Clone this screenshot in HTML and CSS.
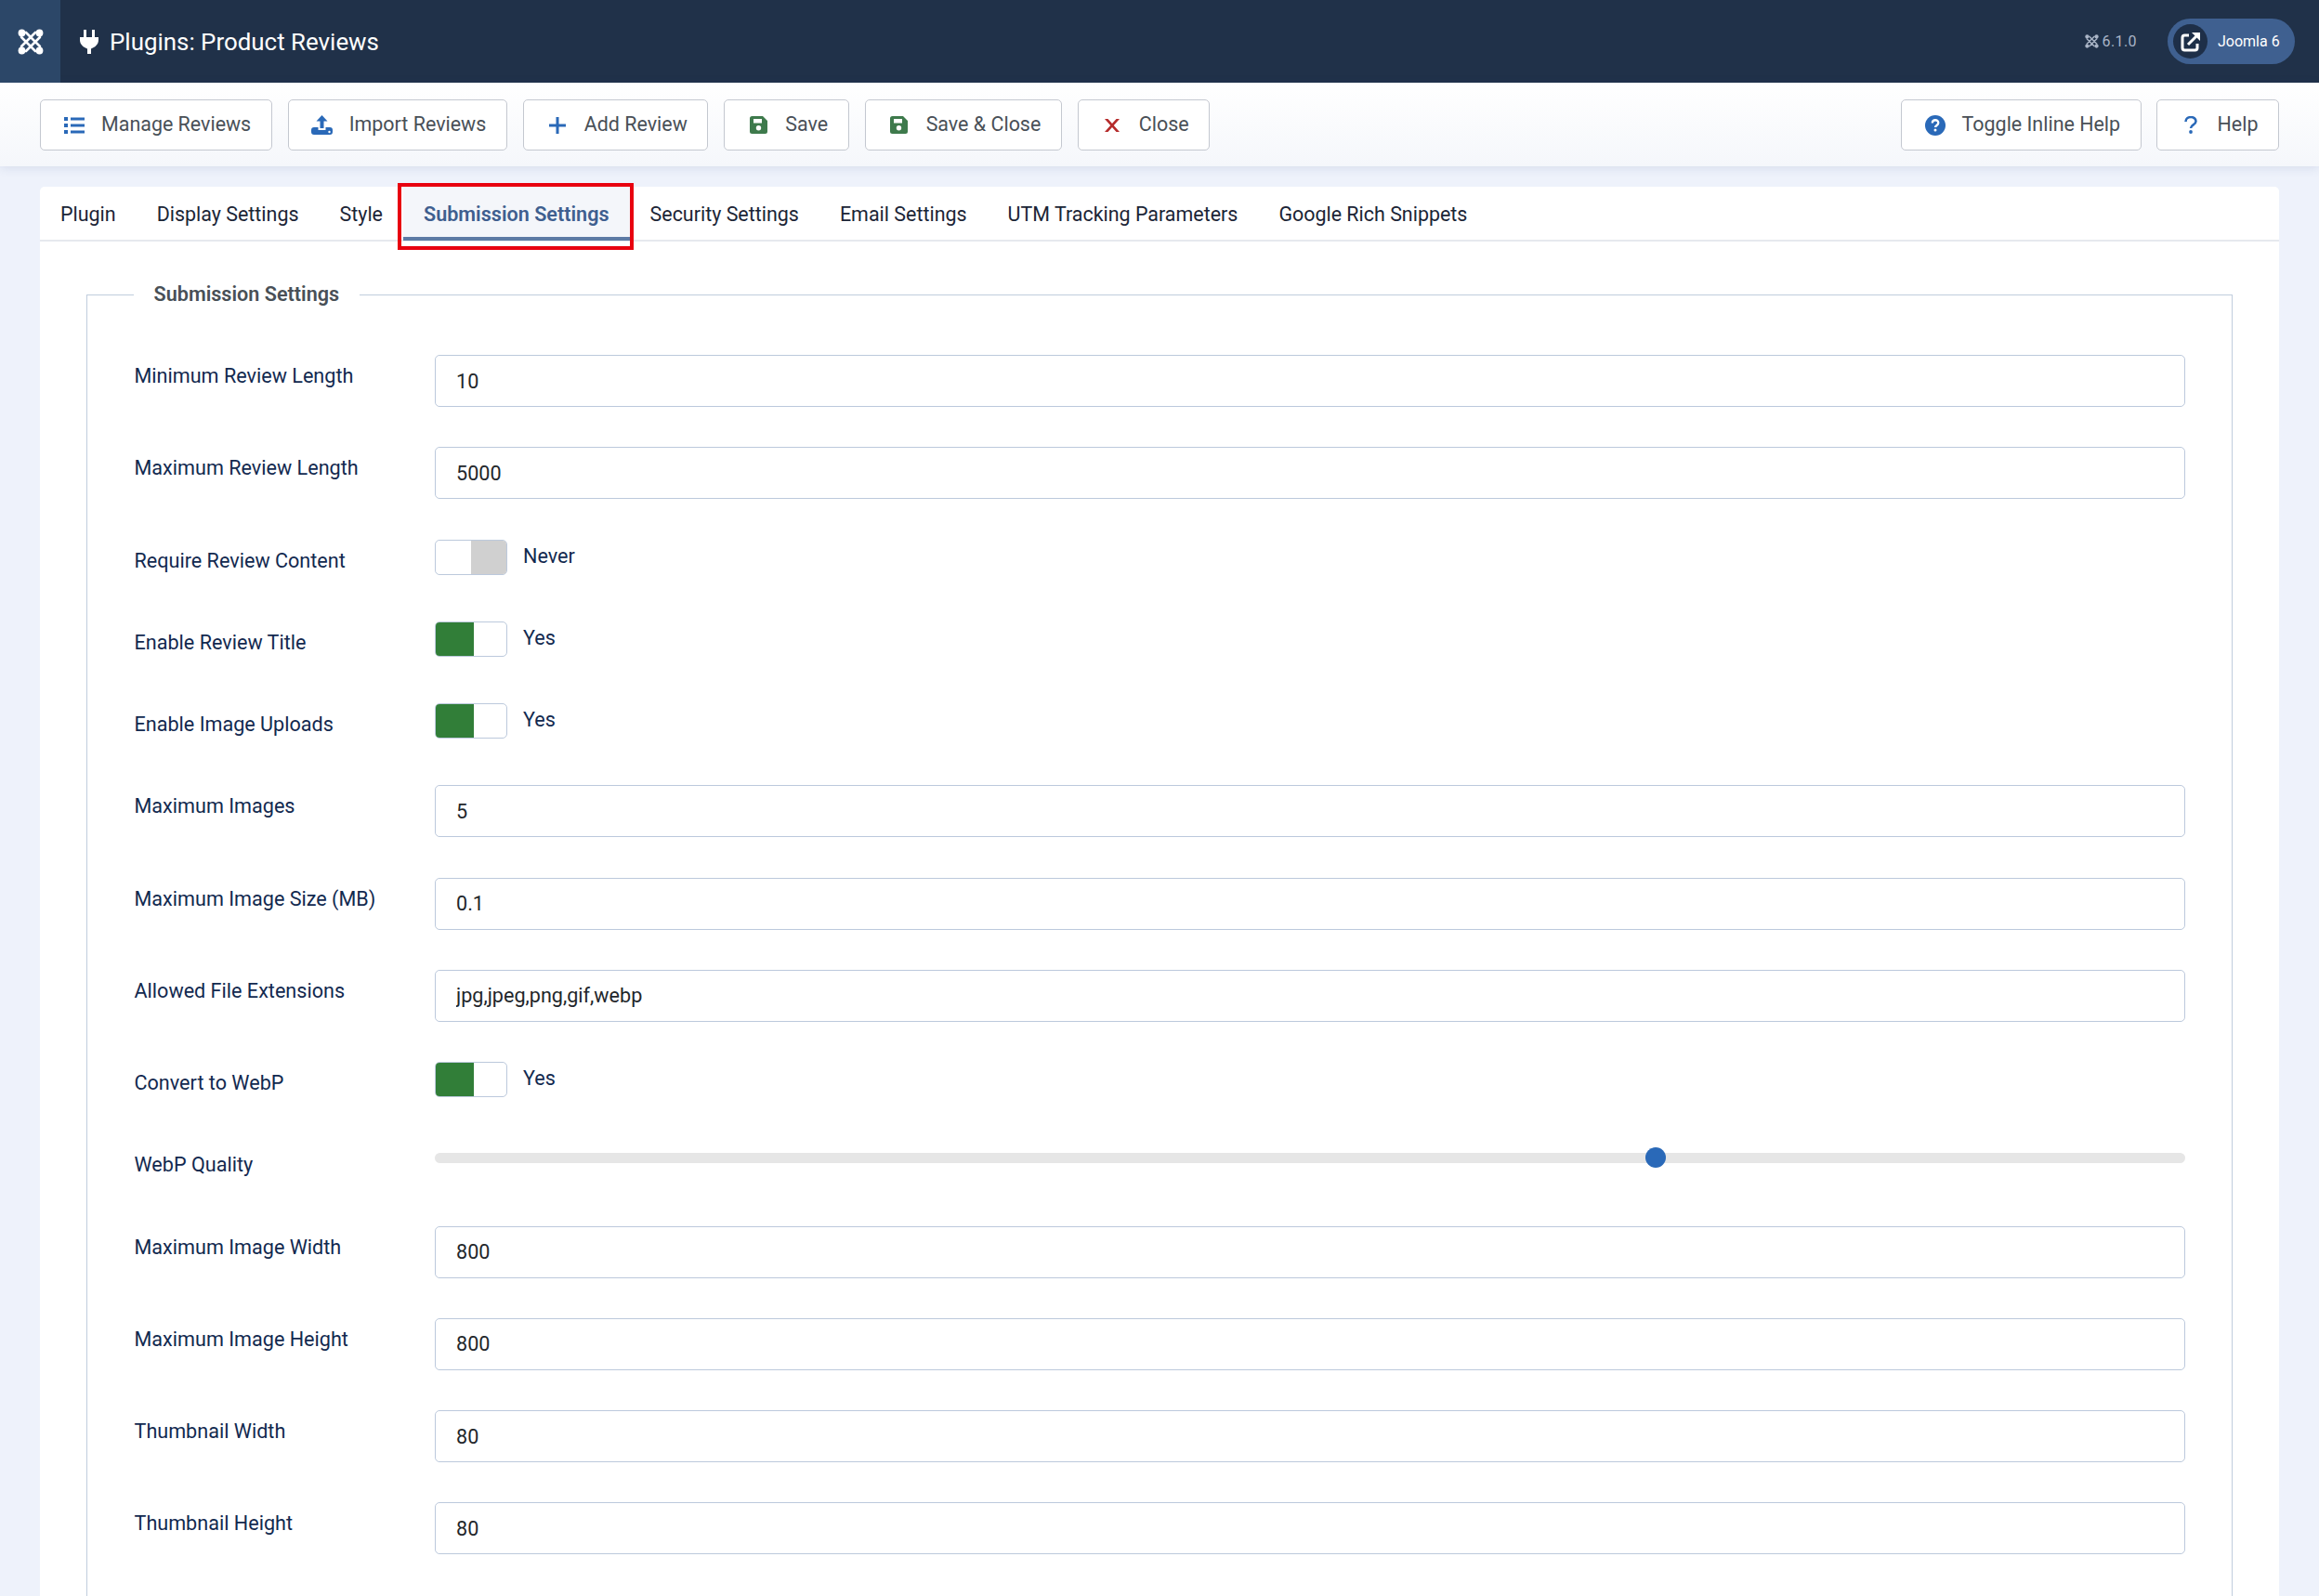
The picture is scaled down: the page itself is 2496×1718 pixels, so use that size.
FILE: index.html
```html
<!DOCTYPE html>
<html lang="en">
<head>
    <meta charset="UTF-8">
    <meta name="viewport" content="width=device-width, initial-scale=1.0">
    <title>Plugins: Product Reviews</title>
    <link rel="stylesheet" href="styles.css">
</head>
<body>
    <header class="topbar">
        <div class="brand">
            <svg class="brand-logo" viewBox="0 0 28 28"><use href="#joomla"/></svg>
        </div>
        <div class="page-title">
            <svg class="plug" viewBox="0 0 22 26"><path d="M5 0h3v8H5zM14 0h3v8h-3zM1 8h20v3c0 5-4 8-8 9.500V26H9v-5.500C5 19 1 16 1 11z"/></svg>
            <h1>Plugins: Product Reviews</h1>
        </div>
        <div class="version">
            <svg class="version-logo" viewBox="0 0 28 28"><use href="#joomla"/></svg>
            <span>6.1.0</span>
        </div>
        <a class="site-link">
            <span class="site-link-icon">
                <svg viewBox="0 0 22 22"><path d="M9 4H4.500A2.500 2.500 0 0 0 2 6.500v11A2.500 2.500 0 0 0 4.500 20h11a2.500 2.500 0 0 0 2.500-2.500V13" fill="none" stroke="#fff" stroke-width="3"/><path d="M8 14L18 4" fill="none" stroke="#fff" stroke-width="3"/><path d="M12 1h9v9z" fill="#fff"/></svg>
            </span>
            <span>Joomla 6</span>
        </a>
    </header>

    <svg class="defs" width="0" height="0">
        <symbol id="joomla" viewBox="0 0 28 28">
            <g fill="none" stroke="currentColor" stroke-width="2.600" stroke-linecap="round">
                <path d="M4 9l15 15M9 4l15 15M24 9L9 24M19 4L4 19"/>
            </g>
            <g fill="currentColor">
                <circle cx="4.500" cy="4.500" r="3.900"/>
                <circle cx="23.500" cy="4.500" r="3.900"/>
                <circle cx="4.500" cy="23.500" r="3.900"/>
                <circle cx="23.500" cy="23.500" r="3.900"/>
            </g>
        </symbol>
        <symbol id="floppy" viewBox="0 0 19 19">
            <path fill-rule="evenodd" d="M2.500 0H14l5 5v11.500a2.500 2.500 0 0 1-2.500 2.500h-14A2.500 2.500 0 0 1 0 16.500v-14A2.500 2.500 0 0 1 2.500 0zM4 3v4.500h9V3zM9.500 10a2.700 2.700 0 1 0 0 5.400 2.700 2.700 0 0 0 0-5.400z"/>
        </symbol>
    </svg>

    <nav class="toolbar">
        <div class="toolbar-group">
            <button class="btn">
                <span class="btn-icon"><svg class="ico-blue" width="22" height="18" viewBox="0 0 22 18"><path d="M0 0h4v4H0zM0 7h4v4H0zM0 14h4v4H0zM7 .500h15v3H7zM7 7.500h15v3H7zM7 14.500h15v3H7z"/></svg></span>
                <span>Manage Reviews</span>
            </button>
            <button class="btn">
                <span class="btn-icon"><svg class="ico-blue" width="23" height="21" viewBox="0 0 23 21"><path d="M11.500 0l6 6.500h-4V14h-4V6.500h-4z"/><path fill-rule="evenodd" d="M3 13h4.500v3h8v-3H20a3 3 0 0 1 3 3v2a3 3 0 0 1-3 3H3a3 3 0 0 1-3-3v-2a3 3 0 0 1 3-3zM19.500 16.800a1.200 1.200 0 1 0 0 2.400 1.200 1.200 0 0 0 0-2.400z"/></svg></span>
                <span>Import Reviews</span>
            </button>
            <button class="btn">
                <span class="btn-icon"><svg class="ico-blue" width="18" height="18" viewBox="0 0 18 18"><path d="M7.500 0h3v7.500H18v3h-7.500V18h-3v-7.500H0v-3h7.500z"/></svg></span>
                <span>Add Review</span>
            </button>
            <button class="btn">
                <span class="btn-icon"><svg class="ico-green" width="19" height="19"><use href="#floppy"/></svg></span>
                <span>Save</span>
            </button>
            <button class="btn">
                <span class="btn-icon"><svg class="ico-green" width="19" height="19"><use href="#floppy"/></svg></span>
                <span>Save &amp; Close</span>
            </button>
            <button class="btn">
                <span class="btn-icon"><svg class="ico-red" width="16" height="14" viewBox="0 0 16 14"><path d="M0 0h3.500L8 5 12.500 0H16L9.800 7 16 14h-3.500L8 9l-4.500 5H0l6.200-7z"/></svg></span>
                <span>Close</span>
            </button>
        </div>
        <div class="toolbar-group toolbar-group-right">
            <button class="btn">
                <span class="btn-icon"><svg width="22" height="22" viewBox="0 0 22 22"><circle class="ico-blue" cx="11" cy="11" r="11"/><path d="M7.800 8.500c0-4.300 6.500-4.300 6.500-.2 0 2.700-3.300 2.500-3.300 4.700" fill="none" stroke="#fff" stroke-width="2.300"/><circle cx="11" cy="16" r="1.500" fill="#fff"/></svg></span>
                <span>Toggle Inline Help</span>
            </button>
            <button class="btn">
                <span class="btn-icon"><svg width="14" height="19" viewBox="0 0 14 19"><path d="M1.500 6C1.500-.5 12.500-.5 12.500 5.500c0 4-5.500 3.800-5.500 7.500" fill="none" stroke="#2a69b8" stroke-width="2.600"/><circle class="ico-blue" cx="7" cy="17" r="1.900"/></svg></span>
                <span>Help</span>
            </button>
        </div>
    </nav>

    <main class="content">
        <div class="tabs">
            <a class="tab">Plugin</a>
            <a class="tab">Display Settings</a>
            <a class="tab">Style</a>
            <a class="tab active">Submission Settings<span class="highlight"></span></a>
            <a class="tab">Security Settings</a>
            <a class="tab">Email Settings</a>
            <a class="tab">UTM Tracking Parameters</a>
            <a class="tab">Google Rich Snippets</a>
        </div>

        <div class="panel">
            <fieldset class="options">
                <legend>Submission Settings</legend>

                <div class="row">
                    <label>Minimum Review Length</label>
                    <input type="text" value="10">
                </div>
                <div class="row">
                    <label>Maximum Review Length</label>
                    <input type="text" value="5000">
                </div>
                <div class="row row-short">
                    <label>Require Review Content</label>
                    <div class="switch-wrap">
                        <span class="switch off"><span class="knob"></span></span>
                        <span class="switch-value">Never</span>
                    </div>
                </div>
                <div class="row row-short">
                    <label>Enable Review Title</label>
                    <div class="switch-wrap">
                        <span class="switch on"><span class="knob"></span></span>
                        <span class="switch-value">Yes</span>
                    </div>
                </div>
                <div class="row row-short">
                    <label>Enable Image Uploads</label>
                    <div class="switch-wrap">
                        <span class="switch on"><span class="knob"></span></span>
                        <span class="switch-value">Yes</span>
                    </div>
                </div>
                <div class="row">
                    <label>Maximum Images</label>
                    <input type="text" value="5">
                </div>
                <div class="row">
                    <label>Maximum Image Size (MB)</label>
                    <input type="text" value="0.1">
                </div>
                <div class="row">
                    <label>Allowed File Extensions</label>
                    <input type="text" value="jpg,jpeg,png,gif,webp">
                </div>
                <div class="row row-short">
                    <label>Convert to WebP</label>
                    <div class="switch-wrap">
                        <span class="switch on"><span class="knob"></span></span>
                        <span class="switch-value">Yes</span>
                    </div>
                </div>
                <div class="row row-short">
                    <label>WebP Quality</label>
                    <input class="range" type="range" min="0" max="100" value="70">
                </div>
                <div class="row">
                    <label>Maximum Image Width</label>
                    <input type="text" value="800">
                </div>
                <div class="row">
                    <label>Maximum Image Height</label>
                    <input type="text" value="800">
                </div>
                <div class="row">
                    <label>Thumbnail Width</label>
                    <input type="text" value="80">
                </div>
                <div class="row">
                    <label>Thumbnail Height</label>
                    <input type="text" value="80">
                </div>
            </fieldset>
        </div>
    </main>
</body>
</html>
```

FILE: styles.css
```css
* {
    box-sizing: border-box;
    margin: 0;
    padding: 0;
}

html, body {
    height: 100vh;
    overflow: hidden;
}

body {
    background: #eef2fb;
    font-family: Roboto, 'Noto Sans', sans-serif;
    font-size: 21.6px;
    color: #22262a;
}

.defs {
    position: absolute;
}

/* top bar */
.topbar {
    display: flex;
    align-items: center;
    height: 89px;
    background: #203149;
    color: #fff;
    padding-right: 26px;
}

.brand {
    display: flex;
    align-items: center;
    justify-content: center;
    width: 65px;
    height: 100%;
    background: #2c4768;
}

.brand-logo {
    width: 28px;
    height: 28px;
    color: #fff;
}

.page-title {
    display: flex;
    align-items: center;
    gap: 11px;
    margin-left: 20px;
    flex: 1;
}

.page-title h1 {
    font-size: 25.9px;
    font-weight: 400;
}

.plug {
    width: 22px;
    height: 26px;
    fill: #fff;
}

.version {
    display: flex;
    align-items: center;
    gap: 4px;
    font-size: 16px;
    letter-spacing: 0.4px;
    color: #a9b4c6;
    margin-right: 33px;
}

.version-logo {
    width: 15px;
    height: 15px;
    color: #a9b4c6;
}

.site-link {
    display: flex;
    align-items: center;
    gap: 11px;
    width: 137px;
    height: 49px;
    padding-left: 6px;
    border-radius: 25px;
    background: #3f6090;
    font-size: 16px;
}

.site-link-icon {
    display: flex;
    align-items: center;
    justify-content: center;
    width: 37px;
    height: 37px;
    border-radius: 50%;
    background: #1e2f48;
}

.site-link-icon svg {
    width: 22px;
    height: 22px;
}

/* toolbar */
.toolbar {
    display: flex;
    justify-content: space-between;
    height: 90px;
    padding: 18px 43px 0;
    background: linear-gradient(#fff, #f5f7fb);
    box-shadow: 0 2px 10px rgba(52, 78, 130, 0.12);
}

.toolbar-group {
    display: flex;
    gap: 17px;
}

.toolbar-group-right {
    gap: 16px;
}

.btn {
    display: flex;
    align-items: center;
    gap: 15px;
    height: 55px;
    padding: 0 21.5px 2px 22px;
    background: #fff;
    border: 1px solid #c4c8d0;
    border-radius: 5px;
    font: inherit;
    font-size: 21.44px;
    color: #495057;
}

.btn-icon {
    display: flex;
    align-items: center;
    justify-content: center;
    width: 28px;
    padding-top: 2px;
}

.ico-blue {
    fill: #2a69b8;
}

.ico-green {
    fill: #3e7a4c;
}

.ico-red {
    fill: #b52b2b;
}

/* tabs */
.content {
    margin: 22px 43px 0;
    background: #fff;
    border-radius: 5px 5px 0 0;
}

.tabs {
    display: flex;
    height: 59px;
    border-bottom: 2px solid #e6e9ee;
    font-size: 21.44px;
}

.tab {
    position: relative;
    height: 58px;
    padding: 0 22px;
    line-height: 59px;
    color: #1b2536;
}

.tab.active {
    font-weight: 600;
    font-size: 21.6px;
    color: #3f5f8f;
    background: #f4f6fa;
    border-bottom: 4px solid #5d7ba5;
}

.highlight {
    position: absolute;
    top: -4px;
    left: -6px;
    right: -4px;
    bottom: -14px;
    border: 4px solid #e8000f;
}

/* form */
.panel {
    padding: 39px 50px 0;
}

.options {
    border: 1px solid #c0cddd;
    padding: 47px 50px 80px 50.5px;
}

.options legend {
    margin-left: -1px;
    padding: 0 22px;
    font-weight: 600;
    line-height: 36px;
    color: #495057;
}

.row {
    display: flex;
    align-items: flex-start;
    height: 56px;
    margin-bottom: 43.25px;
}

.row-short {
    height: 45px;
}

.row label {
    flex: 0 0 323.5px;
    padding-top: 1px;
    line-height: 44px;
    color: #12294f;
}

.row input[type="text"] {
    flex: 1;
    height: 56px;
    padding: 0 22px;
    border: 1px solid #bcc9dc;
    border-radius: 5px;
    font: inherit;
    color: #22262a;
}

.switch-wrap {
    display: flex;
    align-items: center;
    gap: 17px;
    height: 38px;
    color: #12294f;
}

.switch-value {
    padding-bottom: 3px;
}

.switch {
    display: flex;
    width: 78px;
    height: 38px;
    border: 1px solid #bcc9dc;
    border-radius: 5px;
    overflow: hidden;
}

.knob {
    width: 50%;
    height: 100%;
}

.switch.on .knob {
    width: 41px;
    background: #317e38;
}

.switch.off {
    justify-content: flex-end;
}

.switch.off .knob {
    width: 38px;
    background: #d0d0d0;
}

.range {
    flex: 1;
    height: 22px;
    margin-top: 4px;
    appearance: none;
    -webkit-appearance: none;
    background: transparent;
}

.range::-webkit-slider-runnable-track {
    height: 11px;
    border-radius: 6px;
    background: #e6e6e6;
}

.range::-webkit-slider-thumb {
    -webkit-appearance: none;
    width: 22px;
    height: 22px;
    margin-top: -5.500px;
    border-radius: 50%;
    background: #2a69b8;
}
```
